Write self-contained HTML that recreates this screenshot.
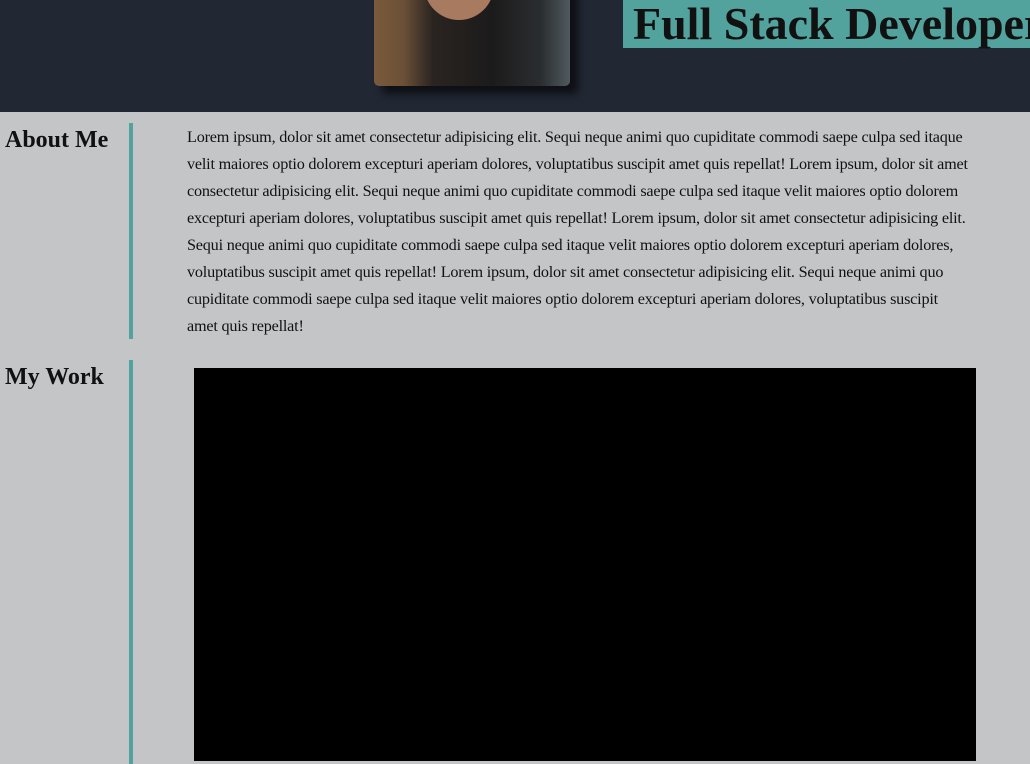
<!DOCTYPE html>
<html><head><style>
body{margin:0;width:1030px;height:764px;overflow:hidden;background:#c4c5c7;font-family:"Liberation Serif",serif;position:relative}
.hdr{position:absolute;left:0;top:0;width:1030px;height:112px;background:#212733}
.photo{position:absolute;left:374px;top:-20px;width:196px;height:106px;border-radius:0 0 5px 5px;box-shadow:8px 8px 8px rgba(0,0,0,.6);background:linear-gradient(90deg,#7a5a3a 0%,#6b5038 15%,#2a2420 30%,#1c1b1b 60%,#2a2d30 85%,#505a5e 100%)}
.face{position:absolute;left:50px;top:0;width:70px;height:40px;background:#a87a60;border-radius:0 0 40px 40px}
.title{position:absolute;left:623px;top:0;width:407px;height:48px;background:#52a29d;color:#111;font-weight:bold;font-size:46px;line-height:48px;padding-left:10px;white-space:nowrap;box-sizing:border-box}
h2{position:absolute;margin:0;font-size:24px;font-weight:bold;color:#111}
.bar{position:absolute;left:129px;width:4px;background:#52a29d}
.txt{position:absolute;left:187px;top:124px;width:800px;font-size:16.2px;line-height:27px;color:#111;letter-spacing:-0.2px;white-space:nowrap}
.vid{position:absolute;left:194px;top:368px;width:782px;height:393px;background:#000}
</style></head><body>
<div class="hdr"><div class="photo"><div class="face"></div></div><div class="title">Full Stack Developer</div></div>
<h2 style="left:5px;top:127px">About Me</h2>
<div class="bar" style="top:123px;height:216px"></div>
<div class="txt">Lorem ipsum, dolor sit amet consectetur adipisicing elit. Sequi neque animi quo cupiditate commodi saepe culpa sed itaque<br>velit maiores optio dolorem excepturi aperiam dolores, voluptatibus suscipit amet quis repellat! Lorem ipsum, dolor sit amet<br>consectetur adipisicing elit. Sequi neque animi quo cupiditate commodi saepe culpa sed itaque velit maiores optio dolorem<br>excepturi aperiam dolores, voluptatibus suscipit amet quis repellat! Lorem ipsum, dolor sit amet consectetur adipisicing elit.<br>Sequi neque animi quo cupiditate commodi saepe culpa sed itaque velit maiores optio dolorem excepturi aperiam dolores,<br>voluptatibus suscipit amet quis repellat! Lorem ipsum, dolor sit amet consectetur adipisicing elit. Sequi neque animi quo<br>cupiditate commodi saepe culpa sed itaque velit maiores optio dolorem excepturi aperiam dolores, voluptatibus suscipit<br>amet quis repellat!</div>
<h2 style="left:5px;top:364px">My Work</h2>
<div class="bar" style="top:360px;height:404px"></div>
<div class="vid"></div>
</body></html>
